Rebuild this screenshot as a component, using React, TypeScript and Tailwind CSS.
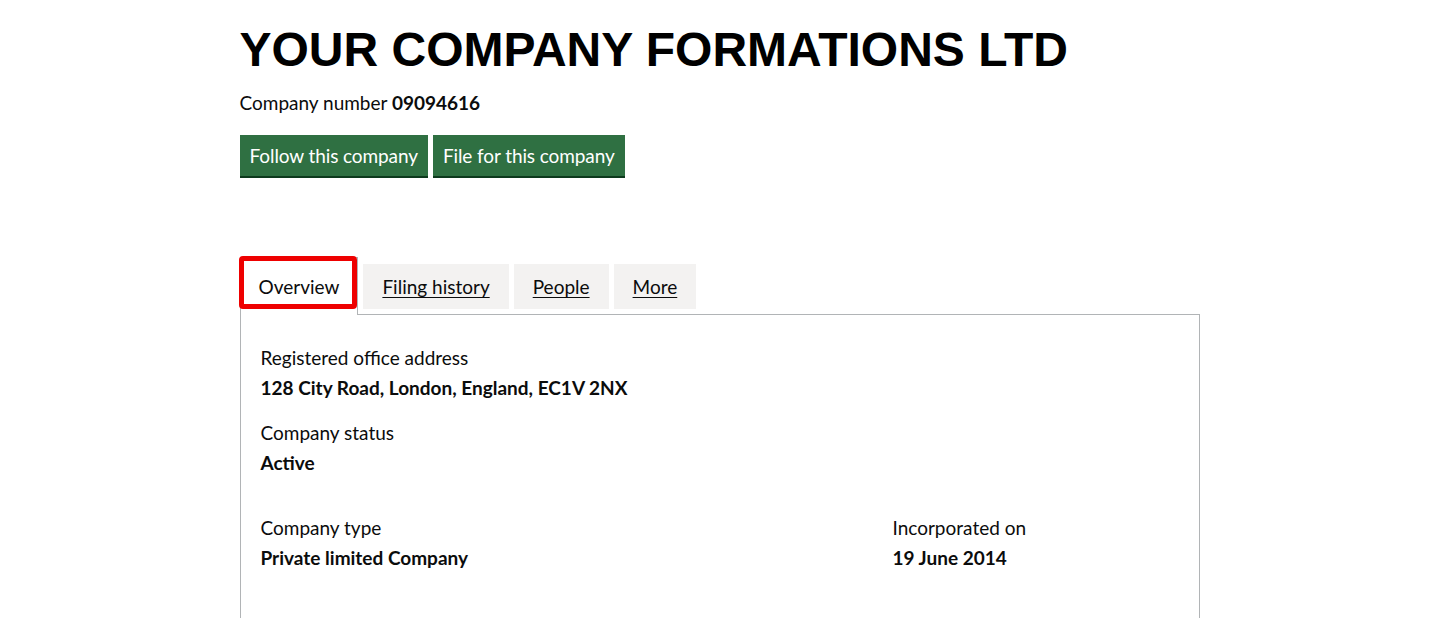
const body = { fontFamily: 'Lato, "Noto Sans", Arial, sans-serif' }

const Field = ({ label, value }: { label: string; value: string }) => (
  <div>
    <div className="text-[19px] leading-[25px] text-[#0b0c0c]">{label}</div>
    <div className="mt-[5px] text-[19px] font-bold leading-[25px] text-[#0b0c0c]">{value}</div>
  </div>
)

export default function App() {
  return (
    <div className="min-h-screen bg-white text-[#0b0c0c]" style={body}>
      <div className="mx-auto w-[960px] pt-[26px]">
        <h1
          className="text-[48px] font-bold leading-none text-black"
          style={{ fontFamily: '"Liberation Sans", Arial, sans-serif' }}
        >
          YOUR COMPANY FORMATIONS LTD
        </h1>

        <p className="mt-[16px] text-[19px] leading-[25px]">
          Company number <span className="font-bold">09094616</span>
        </p>

        <div className="mt-[20px] flex gap-[5px]">
          {["Follow this company", "File for this company"].map((b) => (
            <button
              key={b}
              className="border-2 border-transparent bg-[#2f7042] px-[8px] pt-[7px] pb-[7px] text-[19px] leading-[23px] tracking-[-0.1px] text-white shadow-[0_2px_0_#0d3a1d]"
            >
              {b}
            </button>
          ))}
        </div>

        <div className="mt-[81px] flex items-end">
          <div className="relative z-10 -mb-px border border-b-0 border-[#b1b4b6] bg-white px-[18px] pt-[16px] pb-[16px] text-[19px] leading-[25px]">
            Overview
            <span className="pointer-events-none absolute -top-[2px] -left-[2px] h-[53px] w-[118px] rounded-[4px] border-[5px] border-[#ee0000]" />
          </div>
          {["Filing history", "People", "More"].map((t) => (
            <a
              key={t}
              href="#"
              className="ml-[5px] mb-[5px] bg-[#f3f2f1] px-[19px] pt-[10px] pb-[10px] text-[19px] leading-[25px] text-[#0b0c0c] underline underline-offset-[3px]"
            >
              {t}
            </a>
          ))}
        </div>

        <div className="h-[400px] border border-[#b1b4b6] px-[20px] pt-[30px]">
          <Field label="Registered office address" value="128 City Road, London, England, EC1V 2NX" />
          <div className="mt-[20px]">
            <Field label="Company status" value="Active" />
          </div>
          <div className="mt-[40px] grid grid-cols-[632px_1fr]">
            <Field label="Company type" value="Private limited Company" />
            <Field label="Incorporated on" value="19 June 2014" />
          </div>
        </div>
      </div>
    </div>
  )
}
